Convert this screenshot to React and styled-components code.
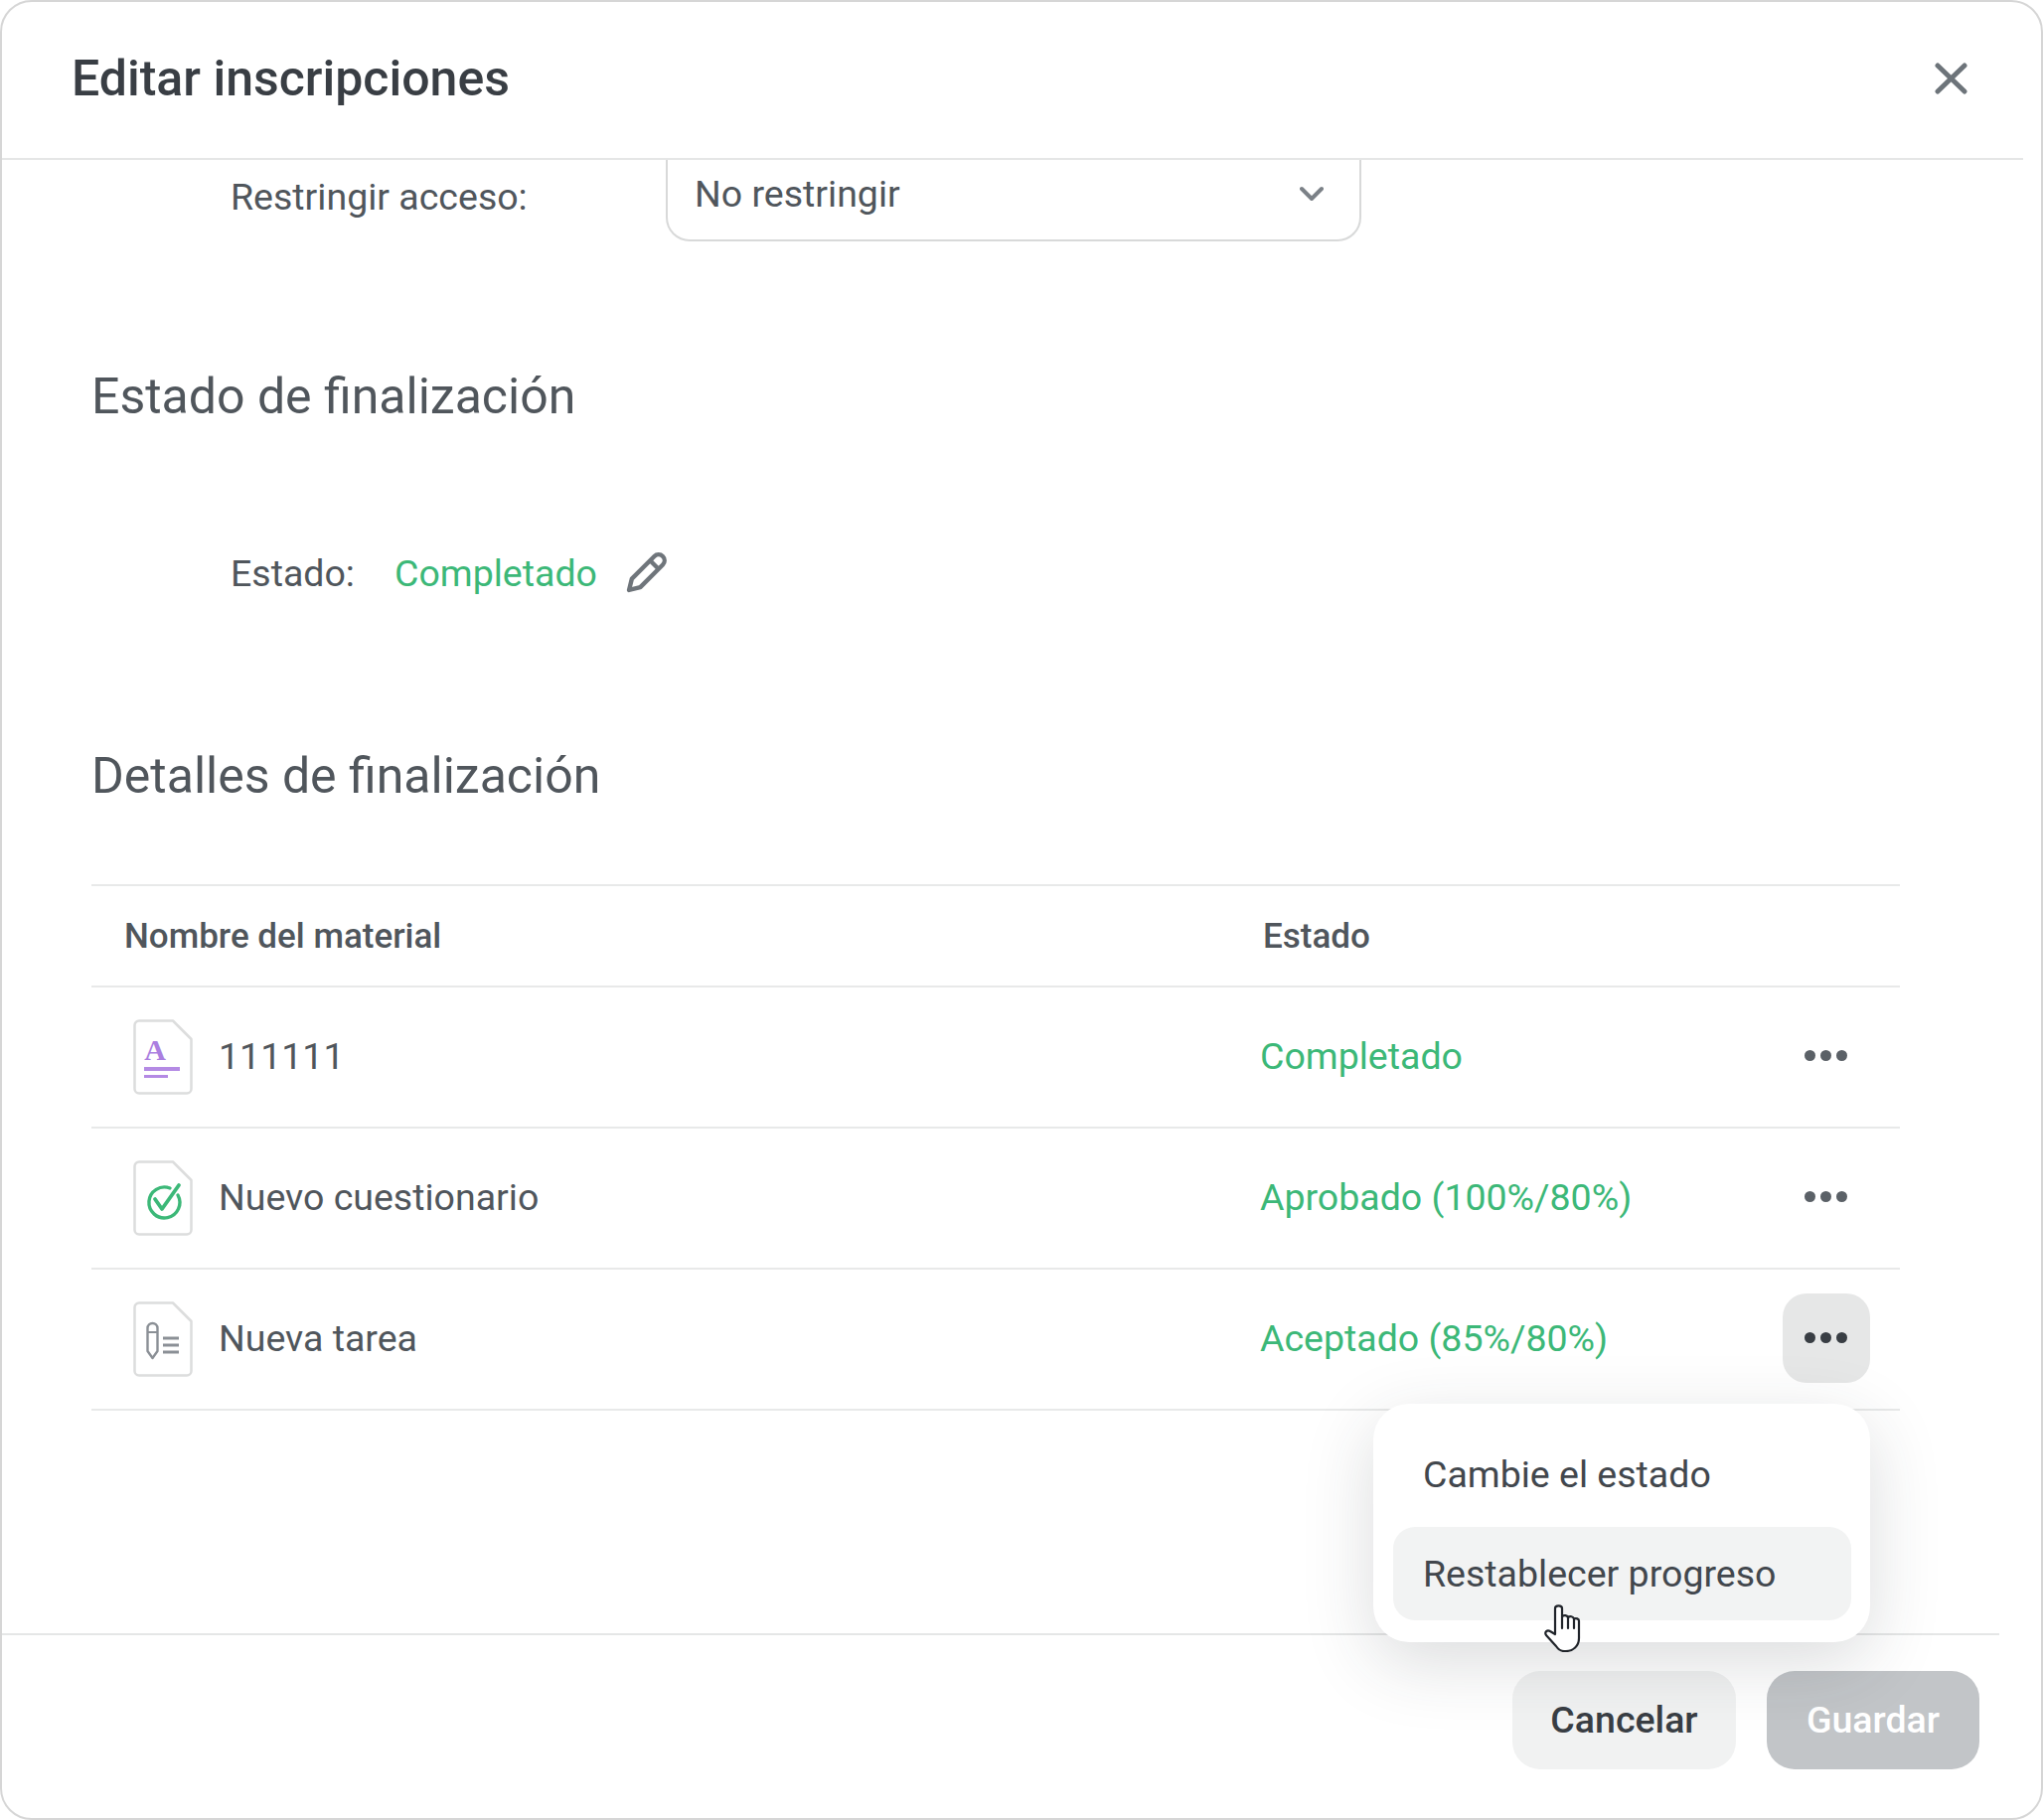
import React from 'react';
import styled, { createGlobalStyle } from 'styled-components';

const Global = createGlobalStyle`
  html, body { margin: 0; padding: 0; background: #fff; }
  * { box-sizing: border-box; }
`;

const Dialog = styled.div`
  width: 2056px; height: 1832px;
  border: 2px solid #d6d6d6; border-radius: 32px;
  background: #fff; overflow: hidden;
  display: flex; flex-direction: column;
  font-family: Roboto, "Liberation Sans", sans-serif;
  color: #50565c;
  font-size: 37.5px;
`;
const Header = styled.header`
  height: 159px; margin-right: 18px;
  padding: 0 0 4px 70px;
  border-bottom: 2px solid #e5e6e6;
  display: flex; align-items: center; justify-content: space-between;
  flex: none;
`;
const Title = styled.h1`
  margin: 0; font-size: 50px; font-weight: 500; color: #393e44;
`;
const CloseButton = styled.button`
  border: 0; background: none; padding: 0; margin-right: 56px; display: flex;
`;
const Body = styled.main`
  flex: 1; padding: 0 142px 0 90px;
`;
const FieldRow = styled.div`
  display: flex; align-items: center;
  padding-left: 140px;
`;
const RestrictLabel = styled.span`
  width: 438px; line-height: 50px; padding-bottom: 8px;
`;
const Select = styled.div`
  width: 700px; height: 82px;
  border: 2px solid #d8d9d9; border-top: 0; border-radius: 0 0 24px 24px;
  display: flex; align-items: center; justify-content: space-between;
  padding: 0 36px 12px 27px; line-height: 50px;
`;
const SectionTitle = styled.h2`
  margin: ${p => p.$top}px 0 0; font-size: 50px; font-weight: 400; line-height: 60px; color: #50565c;
`;
const StatusRow = styled(FieldRow)`
  margin-top: 123px; height: 50px;
`;
const StatusLabel = styled.span`
  width: 165px;
`;
const GreenText = styled.span`
  color: #3cb878;
`;
const CellText = styled.span`
  padding-bottom: 3px;
`;
const PencilButton = styled.button`
  border: 0; background: none; padding: 0; margin-left: 28px; display: flex;
`;
const Table = styled.div`
  margin-top: 79px; width: 1820px; border-top: 2px solid #e8e9e9;
`;
const Columns = styled.div`
  display: grid; grid-template-columns: 1176px 1fr 118px;
  align-items: center;
  border-bottom: 2px solid #e8e9e9;
`;
const HeadRow = styled(Columns)`
  height: 102px; font-size: 35px; font-weight: 500; color: #50565c;
`;
const HeadName = styled.span`padding-left: 33px;`;
const HeadStatus = styled.span`padding-left: 3px;`;
const Row = styled(Columns)`
  height: 142px;
`;
const NameCell = styled.div`
  display: flex; align-items: center; gap: 26px; padding-left: 42px;
`;
const ActionCell = styled.div`
  position: relative; display: flex; padding-bottom: 3px;
`;
const DotsButton = styled.button`
  width: 88px; height: 90px; border: 0; border-radius: 24px; padding: 0 2px 0 0;
  background: ${p => (p.$active ? '#e6e7e7' : 'transparent')};
  display: flex; align-items: center; justify-content: center; gap: 5px;
  color: ${p => (p.$active ? '#393e44' : '#5b6167')};
`;
const Dot = styled.i`
  width: 11px; height: 11px; border-radius: 50%; background: currentColor; display: block;
`;
const Menu = styled.div`
  position: absolute; top: calc(100% + 18px); right: 30px;
  width: 500px; height: 240px; z-index: 5;
  background: #fff; border-radius: 36px;
  padding: 24px 19px 21px 20px;
  box-shadow: 0 20px 70px rgba(40, 48, 56, 0.17);
  display: flex; flex-direction: column; gap: 6px;
  color: #42474d;
`;
const MenuItem = styled.div`
  height: 94px; border-radius: 22px; padding: 0 30px;
  display: flex; align-items: center;
  background: ${p => (p.$hover ? '#f2f3f3' : 'transparent')};
`;
const Cursor = styled.svg`
  position: absolute; left: 172px; top: 202px;
`;
const Footer = styled.footer`
  flex: none; height: 186px; margin-right: 42px;
  border-top: 2px solid #e5e6e6;
  padding: 36px 20px 0 0;
  display: flex; justify-content: flex-end; gap: 31px; align-items: flex-start;
`;
const FooterButton = styled.button`
  width: ${p => p.$w}px; height: 99px; border: 0; border-radius: 28px;
  padding: 0 0 2px;
  font: 500 37.5px Roboto, sans-serif;
  background: ${p => (p.$primary ? '#c2c5c8' : '#f1f2f2')};
  color: ${p => (p.$primary ? '#fff' : '#393e44')};
`;

const Close = () => (
  <svg width="33" height="32" viewBox="0 0 33 32" fill="none" stroke="#6d747a" strokeWidth="5" strokeLinecap="round">
    <path d="M3 3l27 26M30 3L3 29" />
  </svg>
);
const Chevron = () => (
  <svg width="24" height="16" viewBox="0 0 24 16" fill="none" stroke="#7b8187" strokeWidth="4" strokeLinecap="round" strokeLinejoin="round">
    <path d="M2 3l10 10L22 3" />
  </svg>
);
const Pencil = () => (
  <svg width="42" height="42" viewBox="0 0 42 42" fill="none" stroke="#6f757b" strokeWidth="4.4" strokeLinejoin="round">
    <g transform="rotate(45 21 21)">
      <path d="M15 3a6 6 0 0 1 12 0V35L21 45L15 35Z" />
      <path d="M15 9H27" />
    </g>
  </svg>
);
const FileIcon = ({ children }) => (
  <svg width="60" height="76" viewBox="0 0 60 76" fill="none" style={{ flex: 'none' }}>
    <path d="M6 1.5H40L58.5 20V70a4.5 4.5 0 0 1-4.5 4.5H6A4.5 4.5 0 0 1 1.5 70V6A4.5 4.5 0 0 1 6 1.5Z" stroke="#dcdddd" strokeWidth="2.5" strokeLinejoin="round" />
    {children}
  </svg>
);
const TextIcon = () => (
  <FileIcon>
    <text x="22" y="41" textAnchor="middle" fontFamily="'Liberation Serif', serif" fontWeight="700" fontSize="30" fill="#ab7fe0">A</text>
    <rect x="11" y="48" width="36" height="4" fill="#b48ae4" />
    <rect x="11" y="56" width="24" height="3" fill="#b48ae4" />
  </FileIcon>
);
const QuizIcon = () => (
  <FileIcon>
    <path d="M45 35A15.5 15.5 0 1 1 37 28" stroke="#3cb878" strokeWidth="3.4" strokeLinecap="round" />
    <path d="M22 39l7 10 17-24" stroke="#3cb878" strokeWidth="3.8" strokeLinecap="round" strokeLinejoin="round" />
  </FileIcon>
);
const TaskIcon = () => (
  <FileIcon>
    <path d="M14.5 27a5 5 0 0 1 10 0V50L19.5 57L14.5 50Z" stroke="#8b9096" strokeWidth="2.4" strokeLinejoin="round" />
    <path d="M14.5 31H24.5" stroke="#8b9096" strokeWidth="2" />
    <path d="M30 37H46M30 44H46M30 51H46" stroke="#8b9096" strokeWidth="2.8" />
  </FileIcon>
);

const rows = [
  { name: '111111', status: 'Completado', icon: <TextIcon /> },
  { name: 'Nuevo cuestionario', status: 'Aprobado (100%/80%)', icon: <QuizIcon /> },
  { name: 'Nueva tarea', status: 'Aceptado (85%/80%)', icon: <TaskIcon />, open: true },
];

export default function App() {
  return (
    <>
      <Global />
      <Dialog>
        <Header>
          <Title>Editar inscripciones</Title>
          <CloseButton aria-label="Cerrar"><Close /></CloseButton>
        </Header>
        <Body>
          <FieldRow>
            <RestrictLabel>Restringir acceso:</RestrictLabel>
            <Select>No restringir<Chevron /></Select>
          </FieldRow>
          <SectionTitle $top={126}>Estado de finalización</SectionTitle>
          <StatusRow>
            <StatusLabel>Estado:</StatusLabel>
            <GreenText>Completado</GreenText>
            <PencilButton aria-label="Editar"><Pencil /></PencilButton>
          </StatusRow>
          <SectionTitle $top={149}>Detalles de finalización</SectionTitle>
          <Table>
            <HeadRow>
              <HeadName>Nombre del material</HeadName>
              <HeadStatus>Estado</HeadStatus>
            </HeadRow>
            {rows.map(r => (
              <Row key={r.name}>
                <NameCell>{r.icon}<CellText>{r.name}</CellText></NameCell>
                <CellText><GreenText>{r.status}</GreenText></CellText>
                <ActionCell>
                  <DotsButton $active={r.open} aria-label="Más"><Dot /><Dot /><Dot /></DotsButton>
                  {r.open && (
                    <Menu>
                      <MenuItem>Cambie el estado</MenuItem>
                      <MenuItem $hover>Restablecer progreso</MenuItem>
                      <Cursor width="37" height="48" viewBox="0 0 37 48" fill="#fff" stroke="#20242a" strokeWidth="2.2" strokeLinejoin="round" strokeLinecap="round">
                        <path d="M11 30V4c0-3.5 7-3.5 7 0V12c2-1.5 5-1 6 1c2-1.5 5-1 6 1.5c2-1 5 0 5 2V34c0 8-6 13-13 13h-2c-4 0-6-2-8-5L2 31c-2-3 1-6 4-4l5 3Z" />
                        <path d="M18 12v12M24 13v11M30 15v9" />
                      </Cursor>
                    </Menu>
                  )}
                </ActionCell>
              </Row>
            ))}
          </Table>
        </Body>
        <Footer>
          <FooterButton $w={225}>Cancelar</FooterButton>
          <FooterButton $w={214} $primary>Guardar</FooterButton>
        </Footer>
      </Dialog>
    </>
  );
}
